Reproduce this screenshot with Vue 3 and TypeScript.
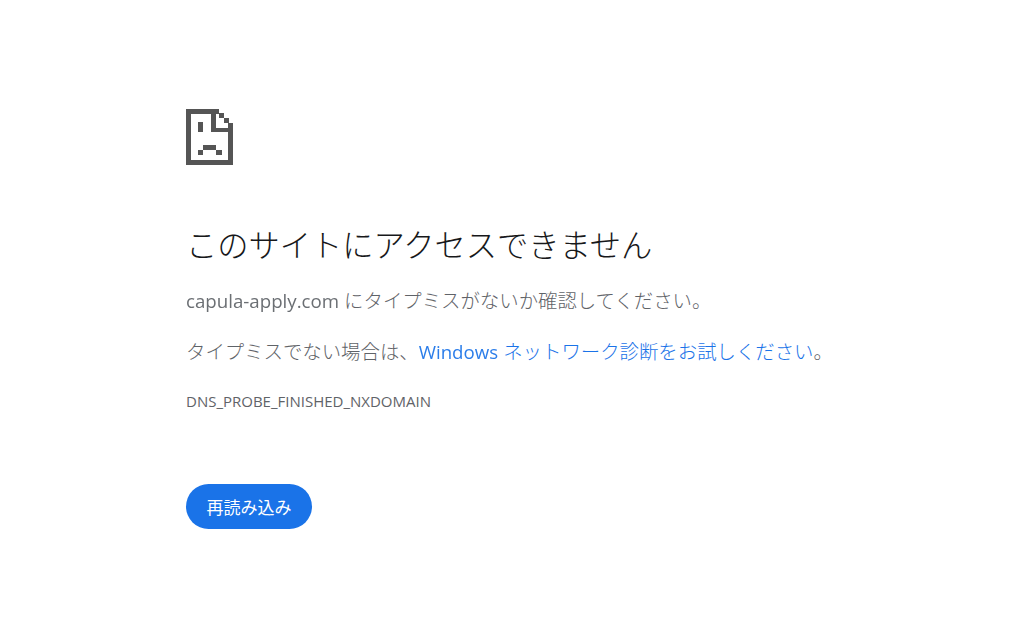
<script setup lang="ts">
const title: string = "このサイトにアクセスできません";
</script>

<template>
  <main class="page">
    <svg class="icon" viewBox="0 0 47 56" width="47" height="56" aria-hidden="true">
      <path fill="#555" d="M0 0H33V5H5V51H42V14H47V56H0ZM25 5H30V19H47V23H25ZM33 4H38V9H33ZM38 9H43V14H38ZM12 13H17V23H12ZM17 36H30V41H17ZM12 41H17V46H12ZM30 41H36V46H30Z" />
    </svg>
    <h1 class="title">{{ title }}</h1>
    <p class="line"><span class="latin">capula-apply.com</span> にタイプミスがないか確認してください。</p>
    <p class="line second">タイプミスでない場合は、<a class="link"><span class="latin">Windows</span> ネットワーク診断をお試しください</a>。</p>
    <div class="code">DNS_PROBE_FINISHED_NXDOMAIN</div>
    <button class="reload" type="button">再読み込み</button>
  </main>
</template>

<style>
html, body { margin: 0; background: #fff; }
</style>

<style scoped>
.page {
  box-sizing: border-box;
  width: 1024px;
  height: 642px;
  padding: 109px 0 0 186px;
  display: flex;
  flex-direction: column;
  align-items: flex-start;
  overflow: hidden;
  font-family: "Open Sans", "Noto Sans CJK JP", sans-serif;
  font-weight: 300;
}
.icon { display: block; flex: none; filter: blur(0.4px); }
.title {
  margin: 59px 0 0;
  font-size: 31.25px;
  line-height: 42px;
  font-weight: 300;
  color: #17181a;
}
.line {
  margin: 20px 0 0;
  font-size: 19.4px;
  line-height: 30px;
  color: #5f6368;
}
.latin { font-size: 18.7px; font-weight: 400; opacity: 0.92; }
.second { margin-top: 21px; }
.link { color: #1a73e8; }
.code {
  margin-top: 24px;
  font-size: 15px;
  font-weight: 400;
  line-height: 20px;
  color: #5f6368;
}
.reload {
  margin-top: 73px;
  width: 126px;
  height: 45px;
  border: 0;
  padding: 0;
  border-radius: 23px;
  background: #1a73e8;
  color: #fff;
  font: 400 17px "Open Sans", "Noto Sans CJK JP", sans-serif;
}
</style>
